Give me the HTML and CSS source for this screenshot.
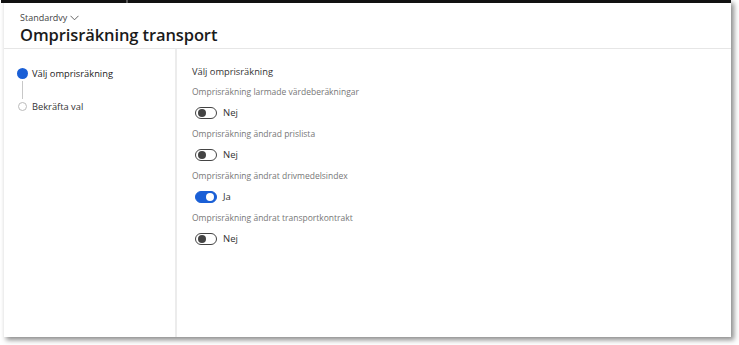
FILE: index.html
```html
<!DOCTYPE html>
<html lang="sv">
<head>
    <meta charset="UTF-8">
    <title>Omprisräkning transport</title>
    <link rel="stylesheet" href="styles.css">
</head>
<body>

<div class="window">
    <div class="topbar"></div>
    <header class="page-header">
        <div class="view-name">Standardvy
            <svg class="chevron" width="9" height="6" viewBox="0 0 9 6"><path d="M0.5 0.8 L4.5 4.8 L8.5 0.8" fill="none" stroke="#555" stroke-width="0.9"/></svg>
        </div>
        <h1>Omprisräkning transport</h1>
    </header>

    <div class="wizard">
        <nav class="steps">
            <div class="step active">
                <span class="dot"></span>
                <span>Välj omprisräkning</span>
            </div>
            <div class="connector"></div>
            <div class="step">
                <span class="dot"></span>
                <span>Bekräfta val</span>
            </div>
        </nav>

        <main class="content">
            <h2>Välj omprisräkning</h2>

            <div class="field">
                <label>Omprisräkning larmade värdeberäkningar</label>
                <div class="toggle-row"><span class="toggle"></span><span>Nej</span></div>
            </div>
            <div class="field">
                <label>Omprisräkning ändrad prislista</label>
                <div class="toggle-row"><span class="toggle"></span><span>Nej</span></div>
            </div>
            <div class="field">
                <label>Omprisräkning ändrat drivmedelsindex</label>
                <div class="toggle-row"><span class="toggle on"></span><span>Ja</span></div>
            </div>
            <div class="field">
                <label>Omprisräkning ändrat transportkontrakt</label>
                <div class="toggle-row"><span class="toggle"></span><span>Nej</span></div>
            </div>
        </main>
    </div>
</div>

</body>
</html>
```

FILE: styles.css
```css
body {
    margin: 0;
    font-family: 'Open Sans', 'Noto Sans', sans-serif;
    background-color: #fff;
    color: #222;
}

.window {
    margin: 0 8px 8px 3px;
    height: 337px;
    display: flex;
    flex-direction: column;
    background-color: #fff;
    border-left: 1px solid #eee;
    box-shadow: 3px 3px 5px rgba(0, 0, 0, 0.45);
}

.topbar {
    height: 3px;
    margin-left: -3px;
    background: linear-gradient(to right, #111 125px, #555 125px, #555 127px, #111 127px);
}

.page-header {
    padding: 9px 0 0 16px;
    height: 36px;
    border-bottom: 1px solid #e6e6e6;
}

.view-name {
    font-size: 9px;
    color: #444;
    line-height: 12px;
    display: flex;
    align-items: center;
    gap: 3px;
}

h1 {
    margin: 0;
    font-size: 16.5px;
    font-weight: 600;
    line-height: 22px;
    color: #1a1a1a;
    letter-spacing: -0.1px;
}

.wizard {
    flex: 1;
    display: flex;
}

.steps {
    box-sizing: border-box;
    width: 173px;
    border-right: 2px solid #ececec;
    padding: 18px 0 0 14px;
}

.step {
    display: flex;
    align-items: center;
    gap: 5px;
    font-size: 9.3px;
    color: #333;
    height: 12px;
}

.step.active {
    color: #222;
}

.dot {
    width: 9px;
    height: 9px;
    border-radius: 50%;
    border: 1px solid #bbb;
    box-sizing: border-box;
    background-color: #fff;
}

.step.active .dot {
    width: 11px;
    height: 11px;
    border: none;
    background-color: #1a5fd6;
    margin-left: -1px;
    margin-right: -1px;
}

.connector {
    width: 1px;
    height: 18px;
    margin: 2px 0 1px 4px;
    background-color: #c8c8c8;
}

.content {
    padding: 16px 0 0 15px;
}

h2 {
    margin: 0 0 7px 0;
    font-size: 9.3px;
    font-weight: 400;
    line-height: 14px;
    color: #333;
}

.field {
    margin-bottom: 9px;
}

.field label {
    display: block;
    font-size: 8.5px;
    color: #777;
    line-height: 11px;
    margin-bottom: 9px;
}

.toggle-row {
    display: flex;
    align-items: center;
    gap: 6px;
    font-size: 9.5px;
    color: #333;
    height: 13px;
    padding-left: 3px;
}

.toggle {
    position: relative;
    width: 20px;
    height: 10px;
    border: 1px solid #444;
    border-radius: 6px;
    background-color: #fff;
}

.toggle::after {
    content: "";
    position: absolute;
    top: 1px;
    left: 2px;
    width: 8px;
    height: 8px;
    border-radius: 50%;
    background-color: #444;
}

.toggle.on {
    background-color: #1a5fd6;
    border-color: #1a5fd6;
}

.toggle.on::after {
    left: auto;
    right: 2px;
    background-color: #fff;
}
```
